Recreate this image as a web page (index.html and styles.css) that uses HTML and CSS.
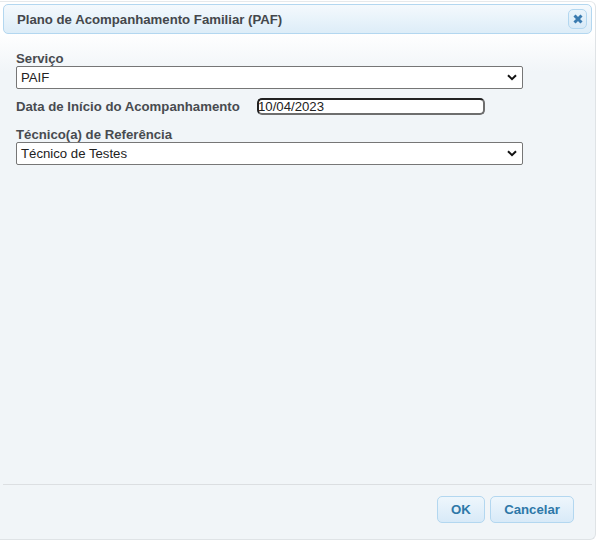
FILE: index.html
```html
<!DOCTYPE html>
<html lang="pt-BR">
<head>
<meta charset="utf-8">
<title>Plano de Acompanhamento Familiar (PAF)</title>
<link rel="stylesheet" href="styles.css">
</head>
<body>
<div class="dialog">
  <header class="titlebar">
    <span class="title">Plano de Acompanhamento Familiar (PAF)</span>
    <button class="close" type="button" aria-label="Fechar">
      <svg width="10" height="10" viewBox="0 0 10 10"><path d="M1.5 1.5 L8.5 8.5 M8.5 1.5 L1.5 8.5" stroke="#3a7bb0" stroke-width="3" stroke-linecap="butt" fill="none"/></svg>
    </button>
  </header>
  <div class="content">
    <label class="label label-first">Serviço</label>
    <div class="select">
      <span>PAIF</span>
      <svg class="chev" width="10" height="7" viewBox="0 0 10 7"><path d="M1 1.2 L5 5.2 L9 1.2" stroke="#111" stroke-width="2" fill="none"/></svg>
    </div>
    <div class="date-row">
      <label class="label date-label">Data de Início do Acompanhamento</label>
      <div class="date-input">10/04/2023</div>
    </div>
    <label class="label">Técnico(a) de Referência</label>
    <div class="select">
      <span>Técnico de Testes</span>
      <svg class="chev" width="10" height="7" viewBox="0 0 10 7"><path d="M1 1.2 L5 5.2 L9 1.2" stroke="#111" stroke-width="2" fill="none"/></svg>
    </div>
  </div>
  <footer class="buttons">
    <button class="btn btn-ok" type="button">OK</button>
    <button class="btn btn-cancel" type="button">Cancelar</button>
  </footer>
</div>
</body>
</html>
```
FILE: styles.css
```css
* { box-sizing: border-box; }
html, body { margin: 0; padding: 0; }
body {
  width: 599px;
  height: 540px;
  background: #fff;
  overflow: hidden;
  font-family: "Liberation Sans", Arial, sans-serif;
}
.dialog {
  width: 596px;
  height: 539px;
  margin-top: 1px;
  padding: 2px 3px 0 3px;
  display: flex;
  flex-direction: column;
  border: 1px solid #dfe3e6;
  border-top-color: #e6e9eb;
  border-left: 0;
  border-radius: 0 6px 6px 0;
  background: linear-gradient(to bottom, #ffffff 30px, #f1f5f8 70px);
}
.titlebar {
  height: 30px;
  padding: 0 4px 0 13px;
  display: flex;
  align-items: center;
  justify-content: space-between;
  border: 1px solid #b3d7f0;
  border-radius: 5px;
  background: linear-gradient(to bottom, #f4f9fd, #ddedf8);
}
.title {
  font-size: 13.2px;
  font-weight: bold;
  color: #44474c;
}
.close {
  width: 19px;
  height: 20px;
  padding: 0;
  display: flex;
  align-items: center;
  justify-content: center;
  border: 1px solid #b3d7f0;
  border-radius: 5px;
  background: linear-gradient(to bottom, #eaf4fb, #d8eaf7);
}
.content {
  flex: 1;
  padding: 18px 0 0 13px;
}
.label {
  display: block;
  font-size: 13.2px;
  font-weight: bold;
  color: #484b50;
  line-height: 14px;
}
.select {
  width: 507px;
  height: 23px;
  padding: 0 5px 0 4px;
  display: flex;
  align-items: center;
  justify-content: space-between;
  font-size: 13.2px;
  color: #222;
  background: #fff;
  border: 1px solid #767676;
  border-radius: 2px;
}
.date-row {
  display: flex;
  align-items: center;
  height: 18px;
  margin: 8px 0 13px;
}
.date-label {
  width: 241px;
  height: 16px;
  padding-top: 2px;
}
.date-input {
  width: 228px;
  height: 17px;
  padding-left: 0;
  font-size: 13.2px;
  line-height: 14px;
  text-indent: -1px;
  color: #222;
  background: #fff;
  border: 2px solid #6e6e6e;
  border-top-color: #222;
  border-left-color: #222;
  border-radius: 5px;
}
.buttons {
  height: 55px;
  padding: 11px 18px 0 0;
  display: flex;
  justify-content: flex-end;
  gap: 5px;
  border-top: 1px solid #dcdfe2;
}
.btn {
  height: 27px;
  padding: 0;
  font-family: inherit;
  font-size: 13.2px;
  font-weight: bold;
  color: #2e78a8;
  border: 1px solid #b3d7f0;
  border-radius: 5px;
  background: linear-gradient(to bottom, #eef6fc, #d8eaf8);
}
.btn-ok { width: 48px; }
.btn-cancel { width: 84px; }
```
